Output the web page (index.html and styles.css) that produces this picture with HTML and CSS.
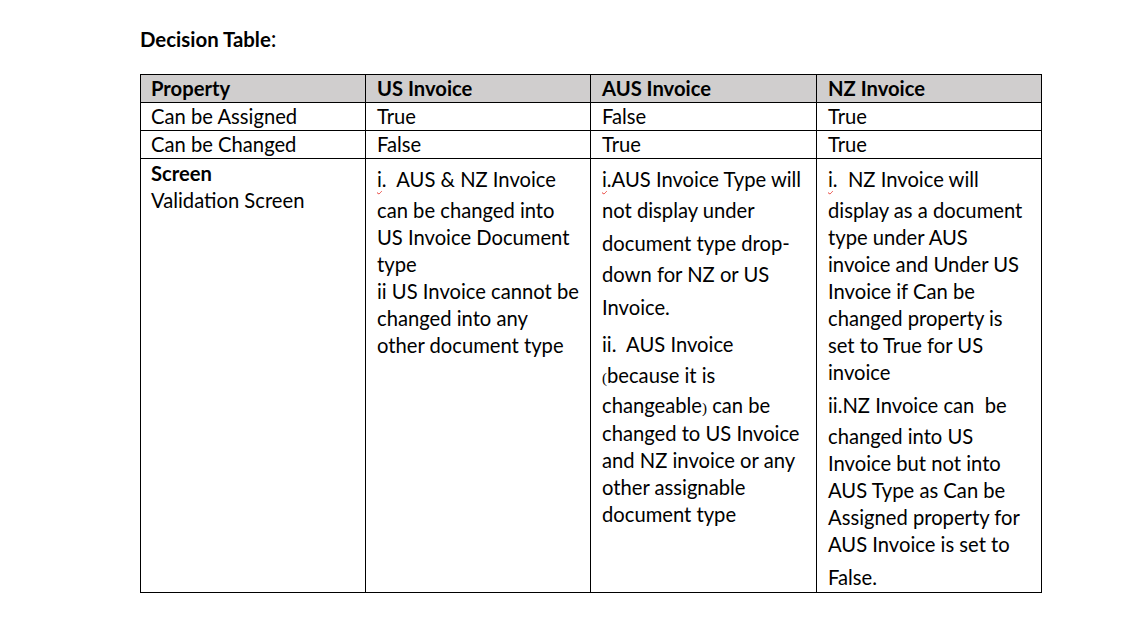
FILE: index.html
```html
<!DOCTYPE html>
<html>
<head>
<meta charset="utf-8">
<link rel="stylesheet" href="styles.css">
</head>
<body>
<div class="page">
  <div class="title">Decision Table<span class="colon">:</span></div>
  <table class="dt">
    <colgroup>
      <col class="c1"><col class="c2"><col class="c3"><col class="c4">
    </colgroup>
    <thead>
      <tr class="head">
        <th>Property</th><th>US Invoice</th><th>AUS Invoice</th><th>NZ Invoice</th>
      </tr>
    </thead>
    <tbody>
      <tr class="row">
        <td>Can be Assigned</td><td>True</td><td>False</td><td>True</td>
      </tr>
      <tr class="row">
        <td>Can be Changed</td><td>False</td><td>True</td><td>True</td>
      </tr>
      <tr class="big">
        <td class="first">
          <div class="ln b">Screen</div>
          <div class="ln">Validation Screen</div>
        </td>
        <td>
          <div class="ln"><span class="sq">i</span>.&nbsp; AUS &amp; NZ Invoice</div>
          <div class="ln m4">can be changed into</div>
          <div class="ln">US Invoice Document</div>
          <div class="ln">type</div>
          <div class="ln">ii US Invoice cannot be</div>
          <div class="ln">changed into any</div>
          <div class="ln">other document type</div>
        </td>
        <td>
          <div class="ln"><span class="sq">i</span>.AUS Invoice Type will</div>
          <div class="ln m4">not display under</div>
          <div class="ln m6">document type drop-</div>
          <div class="ln m4">down for NZ or US</div>
          <div class="ln m6">Invoice.</div>
          <div class="ln m10">ii.&nbsp; AUS Invoice</div>
          <div class="ln m4"><span class="par">(</span>because it is</div>
          <div class="ln m3">changeable<span class="par">)</span> can be</div>
          <div class="ln m1">changed to US Invoice</div>
          <div class="ln">and NZ invoice or any</div>
          <div class="ln">other assignable</div>
          <div class="ln">document type</div>
        </td>
        <td>
          <div class="ln"><span class="sq">i</span>.&nbsp; NZ Invoice will</div>
          <div class="ln m4">display as a document</div>
          <div class="ln">type under AUS</div>
          <div class="ln">invoice and Under US</div>
          <div class="ln">Invoice if Can be</div>
          <div class="ln">changed property is</div>
          <div class="ln">set to True for US</div>
          <div class="ln">invoice</div>
          <div class="ln m6">ii.NZ Invoice can&nbsp; be</div>
          <div class="ln m4">changed into US</div>
          <div class="ln">Invoice but not into</div>
          <div class="ln">AUS Type as Can be</div>
          <div class="ln">Assigned property for</div>
          <div class="ln">AUS Invoice is set to</div>
          <div class="ln m6">False.</div>
        </td>
      </tr>
    </tbody>
  </table>
</div>
</body>
</html>
```
FILE: styles.css
```css
html, body {
  margin: 0;
  padding: 0;
  background: #ffffff;
}

body {
  font-family: Lato, "Open Sans", "Noto Sans", sans-serif;
  color: #000000;
  font-size: 20.2px;
}

.page {
  padding: 24px 0 0 140px;
}

.title {
  font-weight: bold;
  font-size: 20.4px;
  line-height: 28px;
  height: 28px;
  margin-bottom: 22px;
}

.colon {
  font-weight: normal;
  font-size: 23px;
}

.dt {
  border-collapse: collapse;
  table-layout: fixed;
  width: 902px;
}

.c1, .c2, .c4 { width: 225px; }
.c3 { width: 226px; }

.dt th, .dt td {
  border: 1px solid #000000;
  text-align: left;
  vertical-align: top;
  padding: 0 6px 0 11px;
  white-space: nowrap;
}

.dt td:first-child, .dt th:first-child {
  padding-left: 10px;
}

.head th {
  background: #d0cece;
  font-weight: bold;
  height: 27px;
  line-height: 27px;
}

.row td {
  height: 27px;
  line-height: 27px;
}

.big td {
  height: 426px;
  padding-top: 7px;
}

.big td.first {
  padding-top: 1px;
}

.ln {
  line-height: 27px;
  height: 27px;
}

.b { font-weight: bold; }

.m1 { margin-top: 1px; }
.m3 { margin-top: 3px; }
.m4 { margin-top: 4px; }
.m6 { margin-top: 6px; }
.m10 { margin-top: 10px; }

.sq {
  text-decoration: underline wavy #e8413a;
  text-decoration-thickness: 1px;
  text-underline-offset: 3px;
}

.par {
  font-family: "Liberation Serif", serif;
  font-size: 15px;
}
```
